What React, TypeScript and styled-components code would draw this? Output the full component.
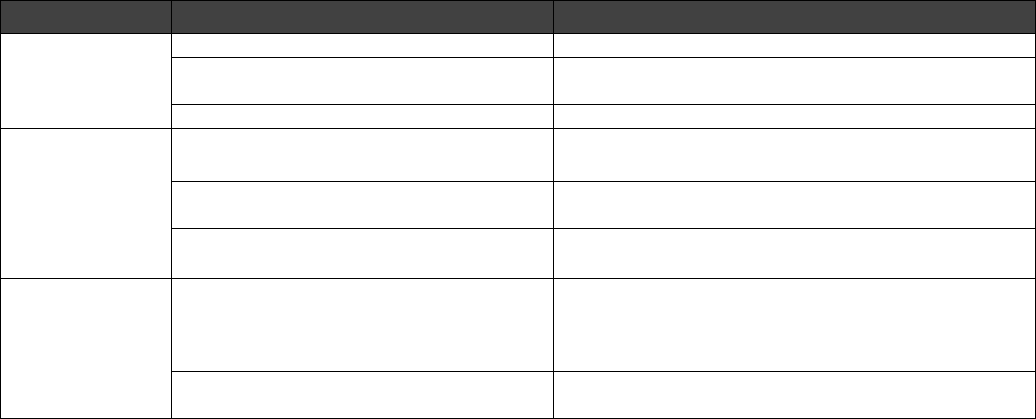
import { createGlobalStyle, styled } from "styled-components"

const GlobalStyle = createGlobalStyle`
  html, body {
    margin: 0;
    padding: 0;
    background: #ffffff;
    font-family: "Liberation Sans", Arial, sans-serif;
  }
`

type Group = {
  rows: number[]
}

// heights of the content area of each body row, grouped by the first column
const groups: Group[] = [
  { rows: [23, 46, 23] },
  { rows: [52, 46, 49] },
  { rows: [92, 46] },
]

const App = () => {
  return (
    <>
      <GlobalStyle />
      <Table>
        <colgroup>
          <col style={{ width: 171 }} />
          <col style={{ width: 382 }} />
          <col style={{ width: 482 }} />
        </colgroup>
        <thead>
          <tr>
            <HeadCell />
            <HeadCell />
            <HeadCell />
          </tr>
        </thead>
        <tbody>
          {groups.map((group, gi) =>
            group.rows.map((h, ri) => (
              <tr key={`${gi}-${ri}`}>
                {ri === 0 && <GroupCell rowSpan={group.rows.length} />}
                <Cell $h={h} />
                <Cell $h={h} />
              </tr>
            ))
          )}
        </tbody>
      </Table>
    </>
  )
}

export default App

const Table = styled.table`
  width: 1036px;
  table-layout: fixed;
  border-collapse: separate;
  border-spacing: 0;
  border-top: 1px solid #000000;
  border-left: 1px solid #000000;
  font-size: 13px;
  color: #000000;
`

const HeadCell = styled.th`
  height: 32px;
  padding: 0;
  background: #414141;
  color: #ffffff;
  font-weight: bold;
  border-right: 1px solid #000000;
  border-bottom: 1px solid #000000;
`

const GroupCell = styled.td`
  padding: 0;
  vertical-align: top;
  border-right: 1px solid #000000;
  border-bottom: 1px solid #000000;
`

const Cell = styled.td<{ $h: number }>`
  height: ${(p) => p.$h}px;
  padding: 0;
  vertical-align: top;
  border-right: 1px solid #000000;
  border-bottom: 1px solid #000000;
`
